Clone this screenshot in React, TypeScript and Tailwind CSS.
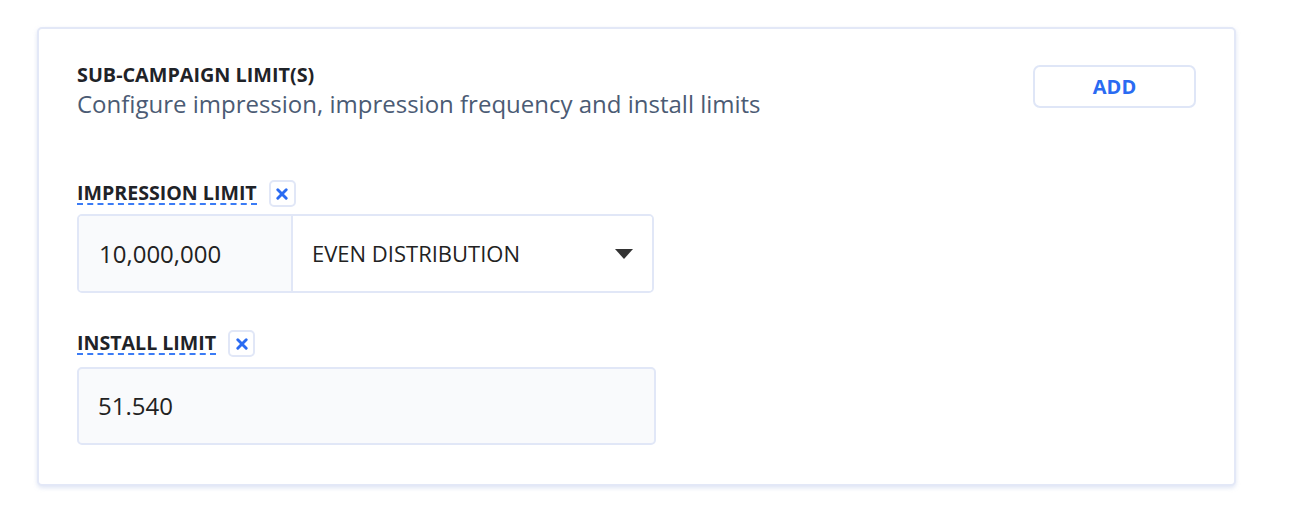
import React from 'react';

const RemoveButton: React.FC = () => (
  <button className="flex h-[27px] w-[27px] items-center justify-center rounded-[5px] border-2 border-[#e1e7f7] bg-white">
    <svg width="12" height="12" viewBox="0 0 10 10">
      <path d="M1.5 1.5l7 7M8.5 1.5l-7 7" stroke="#2a6bf2" strokeWidth="2.4" strokeLinecap="round" />
    </svg>
  </button>
);

const FieldLabel: React.FC<{ text: string }> = ({ text }) => (
  <div className="flex items-center gap-3">
    <span className="border-b-2 border-dashed border-[#3b7bf5] text-[19.6px] font-bold leading-[20px] text-[#1f2328]">
      {text}
    </span>
    <RemoveButton />
  </div>
);

const App: React.FC = () => {
  return (
    <div className="min-h-screen bg-white pl-[37px] pt-[27px] font-['Open_Sans',sans-serif]">
      <div className="h-[459px] w-[1199px] rounded-[5px] border-2 border-[#e3e8f7] bg-white px-[38px] pt-[34px] shadow-[0_2px_4px_rgba(210,218,240,0.7)]">
        <div className="flex items-start justify-between">
          <div>
            <h2 className="text-[19.8px] font-bold leading-[24px] text-[#1f2328]">SUB-CAMPAIGN LIMIT(S)</h2>
            <p className="mt-[2px] text-[24px] leading-[30px] text-[#4b5b74]">
              Configure impression, impression frequency and install limits
            </p>
          </div>
          <button className="mt-[2px] h-[43px] w-[163px] rounded-[7px] border-2 border-[#dfe6f7] bg-white text-[20px] font-bold text-[#2a6bf2]">
            ADD
          </button>
        </div>

        <div className="mt-[61px]">
          <FieldLabel text="IMPRESSION LIMIT" />
          <div className="mt-[7px] flex h-[79px] w-[577px] overflow-hidden rounded-[5px] border-2 border-[#e1e7f7]">
            <div className="flex w-[214px] items-center border-r-2 border-[#e1e7f7] bg-[#f9fafc] pl-[20px] text-[24px] text-[#222]">
              10,000,000
            </div>
            <div className="flex flex-1 items-center justify-between bg-white pl-[19px] pr-[19px] text-[22px] text-[#222]">
              <span>EVEN DISTRIBUTION</span>
              <svg width="18" height="10" viewBox="0 0 18 10">
                <path d="M0 0h18L9 10z" fill="#333" />
              </svg>
            </div>
          </div>
        </div>

        <div className="mt-[37px]">
          <FieldLabel text="INSTALL LIMIT" />
          <div className="mt-[10px] flex h-[78px] w-[579px] items-center rounded-[5px] border-2 border-[#e1e7f7] bg-[#f9fafc] pl-[19px] text-[24px] text-[#222]">
            51.540
          </div>
        </div>
      </div>
    </div>
  );
};

export default App;
